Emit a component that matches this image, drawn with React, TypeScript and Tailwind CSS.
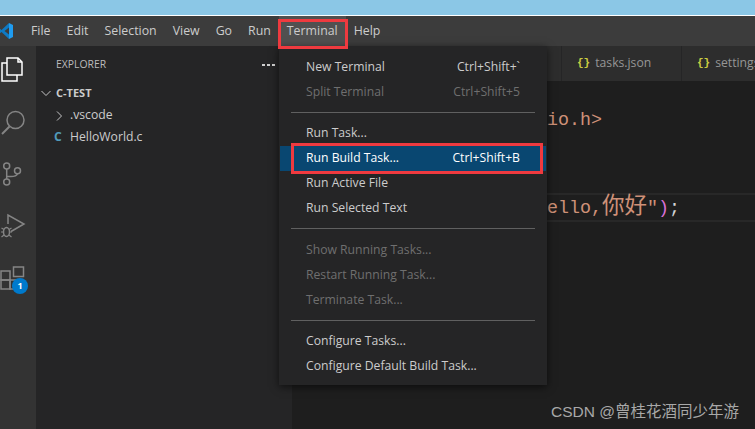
import type { ReactNode } from "react";

const uiFont = "font-['Open_Sans','Noto_Sans',sans-serif]";

const menuNames = ["File", "Edit", "Selection", "View", "Go", "Run"];

function VscodeLogo() {
  return (
    <svg width="16" height="18" viewBox="0 0 16 18" className="ml-[-2px] shrink-0">
      <path d="M11 1 L15 3 V15 L11 17 Z" fill="#1f9cf0" />
      <path d="M11 1 L3.5 8 L0.8 5.8 L-1 6.8 L2 9 L-1 11.2 L0.8 12.2 L3.5 10 L11 17 V12.6 L6.5 9 L11 5.4 Z" fill="#0e7ac4" />
    </svg>
  );
}

function ActivityIcon({ children, className }: { children: ReactNode; className: string }) {
  return (
    <svg width="28" height="30" viewBox="0 0 28 30" fill="none" strokeWidth="1.5" className={className}>
      {children}
    </svg>
  );
}

function ActivityBar() {
  return (
    <div className="relative flex w-9 shrink-0 flex-col items-start bg-[#333333] pt-[8px]">
      <ActivityIcon className="stroke-white">
        <path d="M7 4 H18 L22 8 V21 H7 Z" />
        <path d="M7 9 H2 V27 H17 V21" />
        <path d="M18 4 V8 H22" />
      </ActivityIcon>
      <ActivityIcon className="mt-[22px] stroke-[#858585]">
        <circle cx="15.5" cy="14" r="8.5" />
        <path d="M9.5 20.5 L2 28" strokeWidth="2" />
      </ActivityIcon>
      <ActivityIcon className="mt-[22px] stroke-[#858585]">
        <circle cx="6.7" cy="8" r="3" />
        <circle cx="6.7" cy="24" r="3" />
        <circle cx="17.5" cy="12.7" r="3" />
        <path d="M6.7 11 V21 M6.7 18.5 H11 C14 18.5 16.5 18 17.5 15.7" />
      </ActivityIcon>
      <ActivityIcon className="mt-[22px] stroke-[#858585]">
        <path d="M8 14 V5 L24 14 L11 21.5" />
        <ellipse cx="6.5" cy="22" rx="3" ry="4.5" />
        <path d="M1.5 18 L4 19.5 M11.5 18 L9 19.5 M1 22 H3.5 M9.5 22 H12 M1.5 27 L4 25 M11.5 27 L9 25" strokeWidth="1.2" />
      </ActivityIcon>
      <ActivityIcon className="mt-[22px] stroke-[#858585]">
        <rect x="1" y="9" width="9" height="9" />
        <rect x="1" y="18" width="9" height="9" />
        <rect x="10" y="18" width="9" height="9" />
        <rect x="13.5" y="5" width="10" height="9.5" />
      </ActivityIcon>
      <div className="absolute left-[12px] top-[232px] flex h-4 w-4 items-center justify-center rounded-full bg-[#007acc] text-[9px] font-bold text-white">
        1
      </div>
    </div>
  );
}

function Chevron({ down }: { down?: boolean }) {
  return (
    <svg width="10" height="10" viewBox="0 0 10 10" fill="none" stroke="#c5c5c5" strokeWidth="1">
      <path d={down ? "M0.5 3 L5 7.5 L9.5 3" : "M3 0.5 L7.5 5 L3 9.5"} />
    </svg>
  );
}

function Sidebar() {
  return (
    <div className="w-[256px] shrink-0 bg-[#252526] text-[#cccccc]">
      <div className="flex h-[36px] items-center justify-between pl-5 pr-[17px] pt-[1px]">
        <span className="text-[10.4px] text-[#bbbbbb]">EXPLORER</span>
        <span className="flex gap-[2px]">
          <i className="h-[2px] w-[3px] bg-[#d0d0d0]" />
          <i className="h-[2px] w-[3px] bg-[#d0d0d0]" />
          <i className="h-[2px] w-[3px] bg-[#d0d0d0]" />
        </span>
      </div>
      <div className="flex h-[22px] items-center gap-[5px] pl-[5px] text-[11px] font-bold">
        <Chevron down />
        <span>C-TEST</span>
      </div>
      <div className="flex h-[22px] items-center gap-[6px] pl-[18px] pt-[1px] text-[12.2px]">
        <Chevron />
        <span>.vscode</span>
      </div>
      <div className="flex h-[22px] items-center pl-[18px] pt-[1px] text-[12.2px]">
        <span className="w-[16px] font-bold text-[#519aba]">C</span>
        <span>HelloWorld.c</span>
      </div>
    </div>
  );
}

function Tab({ label, className }: { label: string; className: string }) {
  return (
    <div className={`flex h-full shrink-0 items-center gap-[5px] border-r border-[#252526] bg-[#2d2d2d] pl-[15px] text-[12.2px] text-[#969696] ${className}`}>
      <span className="font-['Liberation_Mono',monospace] text-[11px] font-bold leading-none text-[#cbcb41]">{"{}"}</span>
      <span className="whitespace-nowrap">{label}</span>
    </div>
  );
}

function Editor() {
  const mono = "font-['Liberation_Mono','Noto_Sans_CJK_SC',monospace] text-[18.33px] leading-[29px] whitespace-pre";
  return (
    <div className="flex min-w-0 flex-1 flex-col bg-[#1e1e1e]">
      <div className="flex h-[35px] shrink-0 overflow-hidden bg-[#252526]">
        <div className="h-full w-[270px] shrink-0 border-r border-[#252526] bg-[#2d2d2d]" />
        <Tab label="tasks.json" className="w-[120px]" />
        <Tab label="settings.json" className="w-[120px]" />
      </div>
      <div className={`pl-[112px] pt-[25px] text-[#ce9178] ${mono}`}>
        <div className="h-[29px]">{"#include <stdio.h>"}</div>
        <div className="h-[29px]" />
        <div className="h-[29px]" />
        <div className="-ml-[112px] box-border h-[29px] border-y-2 border-[#282828] pl-[112px] leading-[25px]">
          {'    printf("hello,'}
          <span className="text-[22.5px] leading-[25px]">你好</span>
          {'"'}
          <span className="text-[#da70d6]">)</span>
          <span className="text-[#d4d4d4]">;</span>
        </div>
      </div>
    </div>
  );
}

function MenuRow({ label, keys, disabled, active }: { label: string; keys?: string; disabled?: boolean; active?: boolean }) {
  const tone = active ? "bg-[#094771] text-white" : disabled ? "text-[#6f6f6f]" : "text-[#cccccc]";
  return (
    <div className={`flex h-[25px] items-center justify-between pl-[26px] pr-[26px] pt-px ${tone}`}>
      <span>{label}</span>
      {keys && <span>{keys}</span>}
    </div>
  );
}

function MenuSeparator() {
  return (
    <div className="flex h-[16.5px] items-center px-[11px]">
      <div className="h-px w-full bg-[#606060]" />
    </div>
  );
}

function TerminalMenu() {
  return (
    <div className="absolute left-[279px] top-[46px] w-[268px] bg-[#252526] px-px pb-[6px] pt-2 text-[12.2px] shadow-[0_2px_8px_rgba(0,0,0,0.6)]">
      <MenuRow label="New Terminal" keys="Ctrl+Shift+`" />
      <MenuRow label="Split Terminal" keys="Ctrl+Shift+5" disabled />
      <MenuSeparator />
      <MenuRow label="Run Task..." />
      <MenuRow label="Run Build Task..." keys="Ctrl+Shift+B" active />
      <MenuRow label="Run Active File" />
      <MenuRow label="Run Selected Text" />
      <MenuSeparator />
      <MenuRow label="Show Running Tasks..." disabled />
      <MenuRow label="Restart Running Task..." disabled />
      <MenuRow label="Terminate Task..." disabled />
      <MenuSeparator />
      <MenuRow label="Configure Tasks..." />
      <MenuRow label="Configure Default Build Task..." />
    </div>
  );
}

export default function App() {
  return (
    <div className={`relative flex h-[429px] w-[755px] flex-col overflow-hidden bg-[#1e1e1e] ${uiFont}`}>
      <div className="h-[15px] shrink-0 bg-[#8bc7e6]" />
      <div className="h-px shrink-0 bg-white" />
      <div className="flex h-[30px] shrink-0 items-center bg-[#3c3c3c] text-[12.35px] text-[#cccccc]">
        <VscodeLogo />
        <div className="ml-[9px] flex h-full items-center pt-px">
          {menuNames.map((name) => (
            <span key={name} className="px-2">{name}</span>
          ))}
          <span className="-mt-px flex h-[30px] items-center bg-[#505050] px-2 pt-px">Terminal</span>
          <span className="px-2">Help</span>
        </div>
      </div>
      <div className="flex min-h-0 flex-1">
        <ActivityBar />
        <Sidebar />
        <Editor />
      </div>

      <TerminalMenu />

      {/* red annotation boxes drawn over the screenshot */}
      <div className="absolute left-[278px] top-[19px] h-[30px] w-[70px] border-[3px] border-[#ef3a3f]" />
      <div className="absolute left-[291px] top-[143px] h-[31px] w-[252px] border-[3px] border-[#ef3a3f]" />

      <div className="absolute left-[551px] top-[400px] font-['Liberation_Sans','Noto_Sans_CJK_SC',sans-serif] text-[15.5px] text-[#a8a8a8]">
        CSDN @曾桂花酒同少年游
      </div>
    </div>
  );
}
